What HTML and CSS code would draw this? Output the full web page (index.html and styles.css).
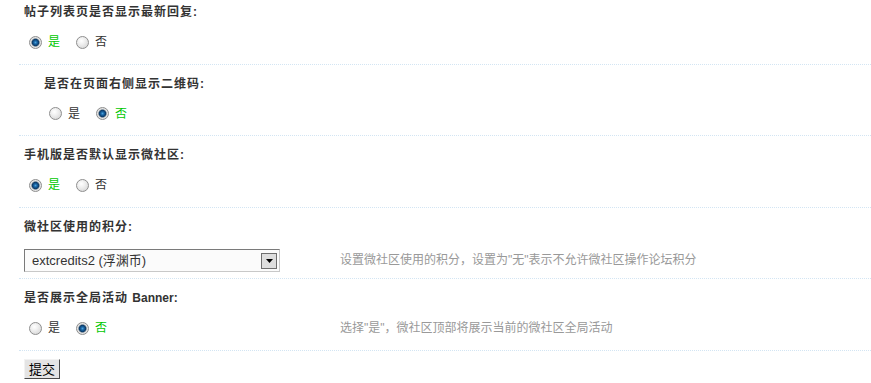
FILE: index.html
```html
<!DOCTYPE html>
<html lang="zh-CN">
<head>
<meta charset="utf-8">
<title>微社区设置</title>
<link rel="stylesheet" href="styles.css">
</head>
<body>
<form class="form">
  <div class="item first">
    <div class="title">帖子列表页是否显示最新回复:</div>
    <div class="row">
      <div class="opts">
        <label class="opt"><input class="radio" type="radio" name="r1" checked><span class="on">是</span></label>
        <label class="opt"><input class="radio" type="radio" name="r1"><span>否</span></label>
      </div>
    </div>
  </div>
  <div class="item indent">
    <div class="title">是否在页面右侧显示二维码:</div>
    <div class="row">
      <div class="opts">
        <label class="opt"><input class="radio" type="radio" name="r2"><span>是</span></label>
        <label class="opt"><input class="radio" type="radio" name="r2" checked><span class="on">否</span></label>
      </div>
    </div>
  </div>
  <div class="item">
    <div class="title">手机版是否默认显示微社区:</div>
    <div class="row">
      <div class="opts">
        <label class="opt"><input class="radio" type="radio" name="r3" checked><span class="on">是</span></label>
        <label class="opt"><input class="radio" type="radio" name="r3"><span>否</span></label>
      </div>
    </div>
  </div>
  <div class="item">
    <div class="title">微社区使用的积分:</div>
    <div class="row row-select">
      <div class="opts">
        <div class="selwrap">
          <select class="sel">
            <option>extcredits2 (浮渊币)</option>
          </select>
          <span class="arrow"><svg width="7" height="4" viewBox="0 0 7 4"><path d="M0 0H7L3.5 4Z" fill="#000"/></svg></span>
        </div>
      </div>
      <div class="tip">设置微社区使用的积分，设置为"无"表示不允许微社区操作论坛积分</div>
    </div>
  </div>
  <div class="item">
    <div class="title">是否展示全局活动 <span class="latin">Banner:</span></div>
    <div class="row">
      <div class="opts">
        <label class="opt"><input class="radio" type="radio" name="r5"><span>是</span></label>
        <label class="opt"><input class="radio" type="radio" name="r5" checked><span class="on">否</span></label>
      </div>
      <div class="tip">选择"是"，微社区顶部将展示当前的微社区全局活动</div>
    </div>
  </div>
  <div class="item submit">
    <button class="btn" type="button">提交</button>
  </div>
</form>
</body>
</html>
```
FILE: styles.css
```css
html, body {
  margin: 0;
  padding: 0;
  background: #fff;
}
body {
  font-family: "Liberation Sans", "Noto Sans CJK SC", sans-serif;
  font-size: 12px;
  color: #333;
}
.form {
  margin: 0 0 0 19px;
}
.item {
  border-top: 1px dotted #d3e5f3;
}
.item.first {
  border-top: none;
}
.title {
  padding: 11px 5px 6px;
  line-height: 16px;
  font-weight: bold;
  letter-spacing: 1px;
  color: #333;
}
.first .title {
  padding-top: 4px;
}
.title .latin {
  letter-spacing: 0;
}
.indent .title {
  padding-left: 25px;
}
.row {
  display: grid;
  grid-template-columns: 316px 1fr;
  align-items: center;
  padding: 5px 0 10.5px;
  min-height: 22px;
}
.row-select {
  padding: 8px 0 6.5px;
  min-height: 23px;
}
.opts {
  display: flex;
  align-items: center;
  padding-left: 10px;
  height: 22px;
}
.row-select .opts {
  padding-left: 5px;
  height: 23px;
}
.indent .opts {
  padding-left: 30px;
}
.opt {
  display: flex;
  align-items: center;
  margin-right: 16px;
  line-height: 16px;
}
.opt span {
  margin-left: 6px;
  color: #333;
}
.opt span.on {
  color: #00c800;
}
.radio {
  -webkit-appearance: none;
  appearance: none;
  width: 13px;
  height: 13px;
  margin: 0;
  border-radius: 50%;
  border: 1px solid #8e8e8e;
  box-sizing: border-box;
  background: radial-gradient(circle at 40% 35%, #ffffff 0, #f0f0f0 35%, #cfcfcf 100%);
}
.radio:checked {
  background: radial-gradient(circle at 50% 50%, #4aa3dc 0, #1c67a6 1.5px, #0b3c6b 3.2px, #6a7c8c 3.8px, #e9e9e9 4.6px, #c9c9c9 100%);
}
.selwrap {
  position: relative;
  width: 256px;
  height: 23px;
}
.sel {
  -webkit-appearance: none;
  appearance: none;
  display: block;
  width: 256px;
  height: 23px;
  margin: 0;
  padding: 0 24px 0 7px;
  border: 1px solid;
  border-color: #7a7a7a #c8c8c8 #c8c8c8 #7a7a7a;
  border-radius: 0;
  background: #fbfbfb;
  font-family: "Liberation Sans", "Noto Sans CJK SC", sans-serif;
  font-size: 13px;
  color: #333;
  line-height: 21px;
}
.arrow {
  position: absolute;
  right: 3px;
  top: 4px;
  width: 14px;
  height: 14px;
  border: 1px solid #6e6e6e;
  background: #dedede;
  display: flex;
  align-items: center;
  justify-content: center;
  pointer-events: none;
}
.arrow svg {
  display: block;
  margin-top: 1px;
}
.tip {
  padding-left: 5px;
  color: #999;
  line-height: 16px;
}
.submit {
  padding: 8px 0 0 5px;
}
.btn {
  display: block;
  width: 36px;
  height: 20px;
  margin: 0;
  padding: 0;
  border: 1px solid;
  border-color: #f2f2f2 #4a4a4a #4a4a4a #f2f2f2;
  background: #e4e4e4;
  font-family: "Noto Sans CJK SC", sans-serif;
  font-size: 13px;
  line-height: 16px;
  color: #000;
}
```
